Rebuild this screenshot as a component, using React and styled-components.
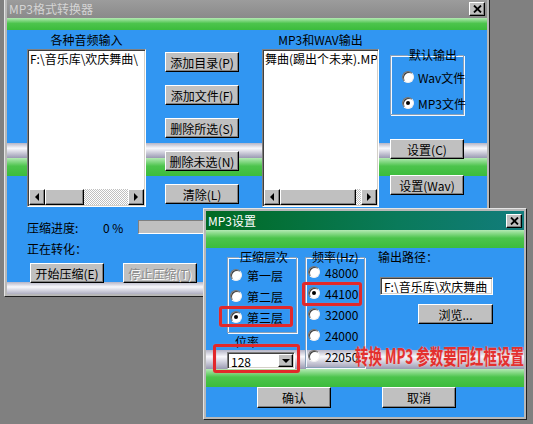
import React from 'react';
import styled, { createGlobalStyle } from 'styled-components';

const GlobalStyle = createGlobalStyle`
  html, body {
    margin: 0;
    padding: 0;
    background: #808080;
  }
  body {
    font-family: "Noto Sans CJK SC", "Liberation Sans", sans-serif;
    font-size: 12px;
    color: #000;
  }
`;

const BLUE = '#3196f2';

// decorative bands painted behind the window contents: [kind, from, to]
const paint = (bands) => {
  const stops = bands.map(([kind, a, b]) => {
    if (kind === 'green') {
      return `#b4eab4 ${a}px, #4cc44c ${a + (b - a) * 0.45}px, #3cbc3c ${b}px`;
    }
    if (kind === 'gray') {
      return `#b4b4c6 ${a}px, #f8f8fc ${a + (b - a) * 0.35}px, #9a9ab2 ${b}px`;
    }
    return `${BLUE} ${a}px, ${BLUE} ${b}px`;
  });
  return `linear-gradient(to bottom, ${stops.join(', ')})`;
};

const Desktop = styled.div`
  position: relative;
  width: 533px;
  height: 424px;
  overflow: hidden;
  background: #808080;
`;

const Window = styled.div`
  position: absolute;
  left: ${(p) => p.$x}px;
  top: ${(p) => p.$y}px;
  width: ${(p) => p.$w}px;
  height: ${(p) => p.$h}px;
  box-sizing: border-box;
  display: flex;
  flex-direction: column;
  background: #b8b8b8;
  border: 1px solid;
  border-color: #e4e4e4 #202020 #202020 #e4e4e4;
  padding: 2px;
`;

const TitleBar = styled.div`
  height: ${(p) => p.$h}px;
  flex-shrink: 0;
  display: flex;
  align-items: center;
  padding-left: 2px;
  background: ${(p) => (p.$active
    ? 'linear-gradient(to right, #006a22, #0a7a5a 60%, #127c7c)'
    : 'linear-gradient(to bottom, #9c9c9c, #8a8a8a)')};
  color: ${(p) => (p.$active ? '#fff' : '#d4d4d4')};
  font-size: 12px;
  line-height: 1;
`;

const CloseButton = styled.div`
  margin-left: auto;
  margin-right: 2px;
  width: 16px;
  height: 14px;
  box-sizing: border-box;
  display: flex;
  align-items: center;
  justify-content: center;
  background: #c0c0c0;
  border: 1px solid;
  border-color: #fff #000 #000 #fff;
  box-shadow: inset -1px -1px 0 #808080;
`;

const Client = styled.div`
  position: relative;
  flex: 1;
  display: flex;
  flex-direction: column;
  background: ${(p) => p.$bg};
  padding: ${(p) => p.$pad};
`;

const Row = styled.div`
  display: flex;
  align-items: flex-start;
  margin-top: ${(p) => p.$mt || 0}px;
  margin-left: ${(p) => p.$ml || 0}px;
  gap: ${(p) => p.$gap || 0}px;
`;

const Column = styled.div`
  display: flex;
  flex-direction: column;
  align-items: flex-start;
  margin-left: ${(p) => p.$ml || 0}px;
  margin-top: ${(p) => p.$mt || 0}px;
  gap: ${(p) => p.$gap || 0}px;
`;

const ColLabel = styled.div`
  width: 100%;
  height: 19px;
  line-height: 19px;
  text-align: center;
  white-space: nowrap;
`;

const Text = styled.div`
  height: ${(p) => p.$h || 16}px;
  line-height: ${(p) => p.$h || 16}px;
  width: ${(p) => (p.$w ? `${p.$w}px` : 'auto')};
  margin-left: ${(p) => p.$ml || 0}px;
  margin-top: ${(p) => p.$mt || 0}px;
  white-space: nowrap;
`;

const Sunken = styled.div`
  box-sizing: border-box;
  width: ${(p) => p.$w}px;
  height: ${(p) => p.$h}px;
  margin-left: ${(p) => p.$ml || 0}px;
  margin-top: ${(p) => p.$mt || 0}px;
  display: flex;
  flex-direction: ${(p) => (p.$row ? 'row' : 'column')};
  align-items: stretch;
  background: ${(p) => p.$bg || '#fff'};
  border: 1px solid;
  border-color: #808080 #fff #fff #808080;
  box-shadow: inset 1px 1px 0 #404040, inset -1px -1px 0 #d4d0c8;
  padding: 1px;
  overflow: hidden;
`;

const ListText = styled.div`
  flex: 1;
  padding: 1px 1px 0;
  line-height: 14px;
  white-space: nowrap;
  overflow: hidden;
`;

const FieldText = styled.div`
  flex: 1;
  padding: 0 2px;
  line-height: 15px;
  white-space: nowrap;
  overflow: hidden;
`;

const ScrollBar = styled.div`
  height: 16px;
  flex-shrink: 0;
  display: flex;
`;

const Raised = styled.div`
  box-sizing: border-box;
  flex-shrink: 0;
  width: ${(p) => p.$w}px;
  height: ${(p) => p.$h || 16}px;
  display: flex;
  align-items: center;
  justify-content: center;
  background: #c0c0c0;
  border: 1px solid;
  border-color: #fff #000 #000 #fff;
  box-shadow: inset -1px -1px 0 #808080;
`;

const Track = styled.div`
  flex: 1;
  background: repeating-conic-gradient(#c0c0c0 0 25%, #fff 0 50%) 0 0 / 2px 2px;
`;

const Arrow = styled.span`
  width: 0;
  height: 0;
  border-style: solid;
  border-color: transparent;
  border-width: ${(p) => (p.$dir === 'down' ? '4px 4px 0 4px' : '4px 0 4px 4px')};
  border-top-color: ${(p) => (p.$dir === 'down' ? '#000' : 'transparent')};
  border-left-color: ${(p) => (p.$dir === 'right' ? '#000' : 'transparent')};
  border-right-color: ${(p) => (p.$dir === 'left' ? '#000' : 'transparent')};
  ${(p) => p.$dir === 'left' && 'border-width: 4px 4px 4px 0;'}
`;

const Button = styled.div`
  box-sizing: border-box;
  width: ${(p) => p.$w || 74}px;
  height: ${(p) => p.$h || 20}px;
  margin-left: ${(p) => p.$ml || 0}px;
  margin-top: ${(p) => p.$mt || 0}px;
  display: flex;
  align-items: center;
  justify-content: center;
  background: #c0c0c0;
  border: 1px solid;
  border-color: #fff #000 #000 #fff;
  box-shadow: inset -1px -1px 0 #808080;
  white-space: nowrap;
  color: ${(p) => (p.$disabled ? '#8a8a8a' : '#000')};
  text-shadow: ${(p) => (p.$disabled ? '1px 1px 0 #fff' : 'none')};
`;

const Group = styled.fieldset`
  box-sizing: border-box;
  width: ${(p) => p.$w}px;
  height: ${(p) => p.$h}px;
  margin: ${(p) => `${p.$mt || 0}px 0 0 ${p.$ml || 0}px`};
  padding: ${(p) => `${p.$pt || 0}px 0 0 ${p.$pl || 0}px`};
  border: 1px solid #8aa0b8;
  box-shadow: 1px 1px 0 #f4f8ff, inset 1px 1px 0 #f4f8ff;
  display: flex;
  flex-direction: column;
  gap: ${(p) => p.$gap || 5}px;
  min-width: 0;
`;

const Legend = styled.legend`
  margin-left: ${(p) => p.$ml || 6}px;
  padding: 0 1px;
  line-height: 14px;
  white-space: nowrap;
`;

const RadioRow = styled.div`
  height: ${(p) => p.$h || 16}px;
  display: flex;
  align-items: center;
  gap: ${(p) => p.$gap || 5}px;
  white-space: nowrap;
`;

const Radio = styled.span`
  position: relative;
  box-sizing: border-box;
  width: 12px;
  height: 12px;
  flex-shrink: 0;
  border-radius: 50%;
  background: #fff;
  border: 1px solid;
  border-color: #707070 #f0f0f0 #f0f0f0 #707070;
  box-shadow: inset 1px 1px 0 #404040;

  &::after {
    content: '';
    display: ${(p) => (p.$checked ? 'block' : 'none')};
    position: absolute;
    left: 3px;
    top: 3px;
    width: 4px;
    height: 4px;
    border-radius: 50%;
    background: #000;
  }
`;

const Progress = styled.div`
  box-sizing: border-box;
  width: 260px;
  height: 14px;
  background: #c0c0c0;
  border: 1px solid;
  border-color: #808080 #fff #fff #808080;
`;

const RedBox = styled.div`
  position: absolute;
  left: ${(p) => p.$x}px;
  top: ${(p) => p.$y}px;
  width: ${(p) => p.$w}px;
  height: ${(p) => p.$h}px;
  box-sizing: border-box;
  border: 3px solid #e2282a;
  border-radius: 3px;
  box-shadow: 0 0 1px #ff8080, inset 0 0 1px #ff8080;
`;

const Note = styled.div`
  position: absolute;
  left: 149px;
  top: 111px;
  font-size: 21px;
  font-weight: 700;
  line-height: 28px;
  color: #e3302e;
  white-space: nowrap;
  transform: scaleX(0.64);
  transform-origin: left center;
  text-shadow: 0 0 2px rgba(255, 190, 190, 0.9);
`;

const XGlyph = () => (
  <svg width="9" height="8" viewBox="0 0 9 8">
    <path d="M1 0.5 L8 7.5 M8 0.5 L1 7.5" stroke="#000" strokeWidth="1.8" />
  </svg>
);

const HScroll = ({ thumb }) => (
  <ScrollBar>
    <Raised $w={16}><Arrow $dir="left" /></Raised>
    <Raised $w={thumb} />
    <Track />
    <Raised $w={16}><Arrow $dir="right" /></Raised>
  </ScrollBar>
);

const mainBg = paint([
  ['green', 0, 12], ['blue', 12, 125], ['gray', 125, 140],
  ['green', 140, 158], ['blue', 158, 264], ['gray', 264, 278],
]);

const dialogBg = paint([
  ['green', 0, 18], ['blue', 18, 120], ['gray', 120, 139],
  ['green', 139, 157], ['blue', 157, 190],
]);

const MainWindow = () => (
  <Window $x={4} $y={-3} $w={486} $h={300}>
    <TitleBar $h={18}>
      MP3格式转换器
      <CloseButton><XGlyph /></CloseButton>
    </TitleBar>
    <Client $bg={mainBg} $pad="12px 0 0 20px">
      <Row>
        <Column>
          <ColLabel>各种音频输入</ColLabel>
          <Sunken $w={119} $h={158}>
            <ListText>F:\音乐库\欢庆舞曲\</ListText>
            <HScroll thumb={39} />
          </Sunken>
        </Column>
        <Column $ml={19} $mt={22} $gap={13}>
          <Button>添加目录(P)</Button>
          <Button>添加文件(F)</Button>
          <Button>删除所选(S)</Button>
          <Button>删除未选(N)</Button>
          <Button>清除(L)</Button>
        </Column>
        <Column $ml={23}>
          <ColLabel>MP3和WAV输出</ColLabel>
          <Sunken $w={117} $h={158}>
            <ListText>舞曲(踢出个未来).MP3</ListText>
            <HScroll thumb={76} />
          </Sunken>
        </Column>
        <Column $ml={11} $mt={18}>
          <Group $w={74} $h={67} $pt={5} $pl={11} $gap={6}>
            <Legend $ml={6}>默认输出</Legend>
            <RadioRow $h={20} $gap={4}><Radio />Wav文件</RadioRow>
            <RadioRow $h={20} $gap={4}><Radio $checked />MP3文件</RadioRow>
          </Group>
          <Button $mt={24}>设置(C)</Button>
          <Button $mt={16}>设置(Wav)</Button>
        </Column>
      </Row>
      <Row $mt={13}>
        <Text $w={76}>压缩进度:</Text>
        <Text $w={35}>0 %</Text>
        <Progress />
      </Row>
      <Text $mt={5}>正在转化：</Text>
      <Row $mt={6} $ml={3} $gap={19}>
        <Button>开始压缩(E)</Button>
        <Button $disabled>停止压缩(T)</Button>
      </Row>
    </Client>
  </Window>
);

const SettingsDialog = () => (
  <Window $x={203} $y={208} $w={324} $h={212}>
    <TitleBar $h={19} $active>
      MP3设置
      <CloseButton><XGlyph /></CloseButton>
    </TitleBar>
    <Client $bg={dialogBg} $pad="20px 0 0 21px">
      <Row>
        <Column>
          <Group $w={70} $h={83} $pt={3} $pl={2}>
            <Legend $ml={9}>压缩层次</Legend>
            <RadioRow><Radio />第一层</RadioRow>
            <RadioRow><Radio />第二层</RadioRow>
            <RadioRow><Radio $checked />第三层</RadioRow>
          </Group>
          <Text $ml={8} $mt={1} $h={15}>位率</Text>
          <Sunken $w={68} $h={17} $mt={3} $row>
            <FieldText>128</FieldText>
            <Raised $w={15} $h={13}><Arrow $dir="down" /></Raised>
          </Sunken>
        </Column>
        <Group $w={60} $h={118} $ml={8} $pt={0} $pl={2} $gap={5}>
          <Legend $ml={3}>频率(Hz)</Legend>
          <RadioRow><Radio />48000</RadioRow>
          <RadioRow><Radio $checked />44100</RadioRow>
          <RadioRow><Radio />32000</RadioRow>
          <RadioRow><Radio />24000</RadioRow>
          <RadioRow><Radio />22050</RadioRow>
        </Group>
        <Column $ml={13}>
          <Text $h={14}>输出路径：</Text>
          <Sunken $w={113} $h={18} $ml={2} $mt={13} $row>
            <FieldText>F:\音乐库\欢庆舞曲</FieldText>
          </Sunken>
          <Button $w={75} $h={20} $ml={40} $mt={9}>浏览...</Button>
        </Column>
      </Row>
      <Row $mt={18} $ml={30} $gap={51}>
        <Button $h={21}>确认</Button>
        <Button $h={21}>取消</Button>
      </Row>
      <RedBox $x={13} $y={76} $w={74} $h={21} />
      <RedBox $x={96} $y={52} $w={60} $h={24} />
      <RedBox $x={7} $y={114} $w={87} $h={29} />
      <Note>转换 MP3 参数要同红框设置</Note>
    </Client>
  </Window>
);

export default function App() {
  return (
    <>
      <GlobalStyle />
      <Desktop>
        <MainWindow />
        <SettingsDialog />
      </Desktop>
    </>
  );
}
